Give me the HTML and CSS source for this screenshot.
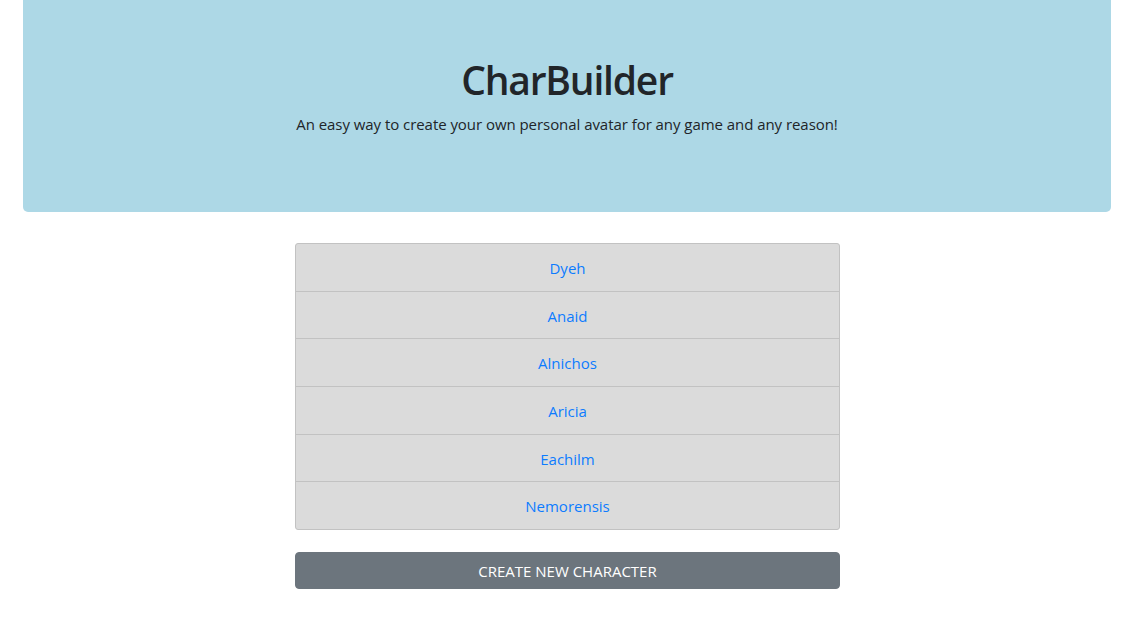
FILE: index.html
```html
<!DOCTYPE html>
<html lang="en">
<head>
<meta charset="utf-8">
<title>CharBuilder</title>
<link rel="stylesheet" href="styles.css">
</head>
<body>
  <header class="jumbotron">
    <h1 class="title">CharBuilder</h1>
    <p class="lead">An easy way to create your own personal avatar for any game and any reason!</p>
  </header>
  <main class="content">
    <ul class="char-list">
      <li class="char-item"><a href="#">Dyeh</a></li>
      <li class="char-item"><a href="#">Anaid</a></li>
      <li class="char-item"><a href="#">Alnichos</a></li>
      <li class="char-item"><a href="#">Aricia</a></li>
      <li class="char-item"><a href="#">Eachilm</a></li>
      <li class="char-item"><a href="#">Nemorensis</a></li>
    </ul>
    <button class="create-btn" type="button">CREATE NEW CHARACTER</button>
  </main>
</body>
</html>
```
FILE: styles.css
```css
* { box-sizing: border-box; }
html, body { margin: 0; padding: 0; background: #fff; }
body {
  font-family: "Open Sans", "Noto Sans", "Liberation Sans", sans-serif;
  font-size: 16px;
  line-height: 1.5;
  color: #212529;
}
.jumbotron {
  margin: 0 32px 0 23px;
  padding: 56px 32px 75.5px;
  background: #add8e6;
  border-radius: 0 0 5px 5px;
  text-align: center;
}
.title {
  margin: 0 0 8px;
  font-size: 39px;
  line-height: 48px;
  font-weight: 600;
  letter-spacing: -1.2px;
  color: #212529;
}
.lead {
  margin: 0;
  font-size: 15px;
  line-height: 24px;
  letter-spacing: -0.05px;
}
.content {
  width: 545px;
  margin: 31.5px 0 0 295px;
  display: flex;
  flex-direction: column;
  gap: 22.3px;
}
.char-list {
  list-style: none;
  margin: 0;
  padding: 0;
  border: 1px solid #c2c2c2;
  border-radius: 3px;
  background: #dbdbdb;
}
.char-item {
  padding: 11.85px 20px 10.85px;
  line-height: 24px;
  text-align: center;
  font-size: 15px;
}
.char-item + .char-item { border-top: 1px solid #c2c2c2; }
.char-item a { color: #0d7bff; text-decoration: none; }
.create-btn {
  display: block;
  width: 100%;
  height: 37px;
  border: 1px solid #6c757d;
  border-radius: 4px;
  background: #6c757d;
  color: #fff;
  font-family: inherit;
  font-size: 15px;
  line-height: 24px;
  padding: 5px 12px;
  text-align: center;
}
```
